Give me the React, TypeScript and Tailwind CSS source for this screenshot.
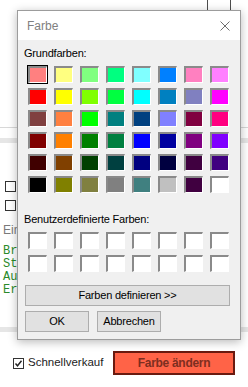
import React from "react";

const basic = [
  "#FF8080", "#FFFF80", "#80FF80", "#00FF80", "#80FFFF", "#0080FF", "#FF80C0", "#FF80FF",
  "#FF0000", "#FFFF00", "#80FF00", "#00FF40", "#00FFFF", "#0080C0", "#8080C0", "#FF00FF",
  "#804040", "#FF8040", "#00FF00", "#008080", "#004080", "#8080FF", "#800040", "#FF0080",
  "#800000", "#FF8000", "#008000", "#008040", "#0000FF", "#0000A0", "#800080", "#8000FF",
  "#400000", "#804000", "#004000", "#004040", "#000080", "#000040", "#400040", "#400080",
  "#000000", "#808000", "#808040", "#808080", "#408080", "#C0C0C0", "#400040", "#FFFFFF",
];

function Swatch({ color, selected }: { color: string; selected?: boolean }) {
  return (
    <div
      className={
        "w-[19px] h-[17px] border-l-2 border-t-2 border-r border-b border-l-[#8a8a8a] border-t-[#8a8a8a] border-r-white border-b-white" +
        (selected ? " outline outline-1 outline-black" : "")
      }
      style={{ backgroundColor: color }}
    />
  );
}

function Box({ checked }: { checked?: boolean }) {
  return (
    <div className="w-[11px] h-[11px] border border-[#333333] bg-white flex items-center justify-center">
      {checked && (
        <svg width="9" height="9" viewBox="0 0 9 9">
          <path d="M1.5 4.5 L3.5 6.8 L7.5 1.8" fill="none" stroke="#222" strokeWidth="1.4" />
        </svg>
      )}
    </div>
  );
}

export default function App() {
  return (
    <div
      className="relative w-[248px] h-[387px] overflow-hidden bg-white text-black"
      style={{ fontFamily: '"Liberation Sans", Arial, sans-serif' }}
    >
      {/* background application */}
      <div className="flex flex-col">
        <div className="h-[10px] pl-[207px] flex">
          <div className="w-[24px] h-full border-x border-[#4d4d4d]" />
        </div>
        <div className="mt-[117px] h-px bg-[#d8d8d8]" />
        <div className="mt-[10px] h-[5px] bg-[#e6e6e6]" />
        <div className="mt-[38px] pl-[5px]">
          <Box />
        </div>
        <div className="mt-[8px] pl-[5px]">
          <Box />
        </div>
        <div className="mt-[12px] pl-[3px] w-[26px] whitespace-nowrap text-[12px] leading-[14px] text-[#7a7a7a]">Ein</div>
        <div
          className="mt-[8px] pl-[3px] w-[26px] whitespace-nowrap text-[12px] leading-[13px] text-[#2a8a2a]"
          style={{ fontFamily: '"Liberation Mono", "Courier New", monospace' }}
        >
          <div>Br</div>
          <div>St</div>
          <div>Au</div>
          <div>Er</div>
        </div>
        <div className="mt-[30px] h-[5px] bg-[#e6e6e6]" />
        <div className="mt-[19px] flex items-center pl-[13px]">
          <Box checked />
          <span className="ml-[4px] text-[11.5px] text-[#222]">Schnellverkauf</span>
          <button className="ml-auto mr-[13px] w-[122px] h-[24px] bg-[#FF6347] border-2 border-[#6a1a10] text-[12px] font-bold tracking-[-0.3px] text-[#7d2e20] flex items-center justify-center">
            Farbe ändern
          </button>
        </div>
      </div>

      {/* color dialog */}
      <div className="absolute left-[17px] top-[10px] w-[224px] h-[330px] border border-[#9c9c9c] bg-[#f0f0f0] shadow-[0_2px_9px_rgba(0,0,0,0.28)] flex flex-col">
        <div className="h-[29px] bg-white flex items-center pl-[9px] pr-[10px]">
          <span className="text-[12px] text-[#808080]">Farbe</span>
          <svg className="ml-auto" width="10" height="10" viewBox="0 0 10 10">
            <path d="M0.5 0.5 L9.5 9.5 M9.5 0.5 L0.5 9.5" stroke="#6e6e6e" strokeWidth="1" fill="none" />
          </svg>
        </div>
        <div className="flex flex-col pt-[6px] pb-[7px] text-[11px] tracking-[-0.2px]">
          <div className="pl-[6px] h-[14px] leading-[14px]">Grundfarben:</div>
          <div className="mt-[6px] pl-[10px] grid grid-cols-[repeat(8,19px)] gap-x-[7px] gap-y-[5px]">
            {basic.map((c, i) => (
              <Swatch key={i} color={c} selected={i === 0} />
            ))}
          </div>
          <div className="mt-[19px] pl-[6px] h-[14px] leading-[14px]">Benutzerdefinierte Farben:</div>
          <div className="mt-[6px] pl-[10px] grid grid-cols-[repeat(8,19px)] gap-x-[7px] gap-y-[6px]">
            {Array.from({ length: 16 }).map((_, i) => (
              <Swatch key={i} color="#FFFFFF" />
            ))}
          </div>
          <div className="mt-[13px] ml-[7px] w-[205px] h-[21px] bg-[#e1e1e1] border border-[#adadad] flex items-center justify-center text-[11px]">
            Farben definieren &gt;&gt;
          </div>
          <div className="mt-[5px] ml-[7px] flex gap-[8px]">
            <div className="w-[64px] h-[21px] bg-[#e1e1e1] border border-[#adadad] flex items-center justify-center">OK</div>
            <div className="w-[64px] h-[21px] bg-[#e1e1e1] border border-[#adadad] flex items-center justify-center">Abbrechen</div>
          </div>
        </div>
      </div>
    </div>
  );
}
